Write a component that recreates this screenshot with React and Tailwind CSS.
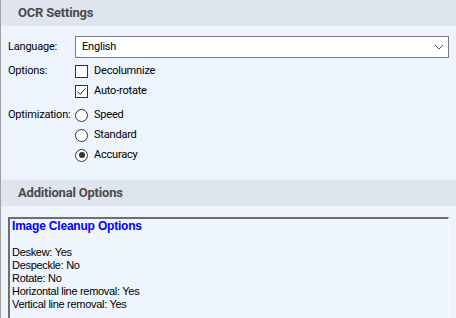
import { useState } from 'react'

function Header({ children }) {
  return (
    <div className="flex h-[26px] items-center bg-[#dee5ee] pl-[17px] text-[13px] font-bold text-[#4b4b4b]">
      {children}
    </div>
  )
}

function Checkbox({ checked, label }) {
  return (
    <label className="flex h-[20px] items-center gap-[6px]">
      <span className="flex h-[13px] w-[13px] items-center justify-center border border-[#333333] bg-white">
        {checked ? (
          <svg width="11" height="11" viewBox="0 0 11 11">
            <path d="M1.5 5.5 L4.2 8.3 L9.5 2.2" fill="none" stroke="#333" strokeWidth="1" />
          </svg>
        ) : null}
      </span>
      <span>{label}</span>
    </label>
  )
}

function Radio({ checked, label }) {
  return (
    <label className="flex h-[20px] items-center gap-[6px]">
      <span className="flex h-[13px] w-[13px] items-center justify-center rounded-full border border-[#333333] bg-white">
        {checked ? <span className="h-[6px] w-[6px] rounded-full bg-[#333333]" /> : null}
      </span>
      <span>{label}</span>
    </label>
  )
}

export default function App() {
  const [opt] = useState('Accuracy')
  const cleanup = [
    'Deskew: Yes',
    'Despeckle: No',
    'Rotate: No',
    'Horizontal line removal: Yes',
    'Vertical line removal: Yes',
  ]

  return (
    <div className="h-[318px] w-[456px] overflow-hidden border-l border-[#a0a0a0] bg-[#edf4fd] font-['Roboto',sans-serif] text-[11px] tracking-[-0.2px] text-black">
      <Header>OCR Settings</Header>

      <div className="px-[7px] pt-[10px]">
        <div className="flex h-[22px] items-center">
          <div className="w-[67px]">Language:</div>
          <div className="flex h-[22px] flex-1 items-center justify-between border border-[#7a7a7a] bg-white pl-[6px] pr-[4px]">
            <span>English</span>
            <svg width="10" height="6" viewBox="0 0 10 6">
              <path d="M1 1 L5 5 L9 1" fill="none" stroke="#555" strokeWidth="1" />
            </svg>
          </div>
        </div>

        <div className="mt-[3px] flex">
          <div className="flex h-[20px] w-[67px] items-center">Options:</div>
          <div className="flex flex-col">
            <Checkbox checked={false} label="Decolumnize" />
            <Checkbox checked label="Auto-rotate" />
          </div>
        </div>

        <div className="mt-[4px] flex">
          <div className="flex h-[20px] w-[67px] items-center">Optimization:</div>
          <div className="flex flex-col">
            {['Speed', 'Standard', 'Accuracy'].map((o) => (
              <Radio key={o} label={o} checked={o === opt} />
            ))}
          </div>
        </div>
      </div>

      <div className="mt-[15px]">
        <Header>Additional Options</Header>
      </div>

      <div className="px-[7px] pt-[11px]">
        <div className="h-[120px] border-l-2 border-t-2 border-r border-b border-l-[#6e6e6e] border-t-[#6e6e6e] border-r-[#fafafa] border-b-[#fafafa] bg-[#eef5fe] pl-[2px] pt-[1px] font-['Liberation_Sans',Arial,sans-serif] text-[11px] leading-[13px] tracking-[-0.3px]">
          <div className="text-[12px] font-bold tracking-[-0.2px] text-[#0000ff]">Image Cleanup Options</div>
          <div className="h-[13px]" />
          {cleanup.map((l) => (
            <div key={l}>{l}</div>
          ))}
        </div>
      </div>
    </div>
  )
}
